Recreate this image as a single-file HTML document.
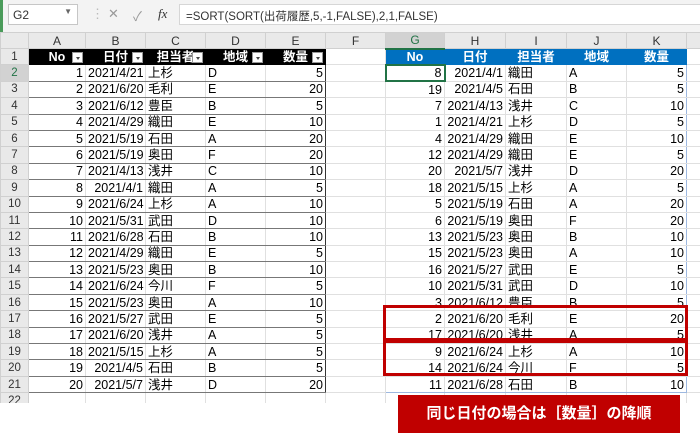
<!DOCTYPE html><html><head><meta charset="utf-8"><style>
*{margin:0;padding:0;box-sizing:border-box}
body{width:700px;height:441px;background:#fff;position:relative;overflow:hidden;font-family:"Liberation Sans","Noto Sans CJK JP",sans-serif;font-size:12px;color:#000}
.fb{position:absolute;left:0;top:0;width:700px;height:32px;background:#f3f3f3;border-left:3px solid #4a9b5a}
.nb{position:absolute;left:5px;top:4px;width:70px;height:21px;background:#fff;border:1px solid #c6c6c6;font-size:12px;padding:3px 0 0 4px;color:#333}
.nb span{position:absolute;right:5px;top:2px;font-size:8px;color:#666}
.ic{position:absolute;top:6px;color:#999;font-size:13px}
.fm{position:absolute;left:176px;top:4px;width:524px;height:21px;background:#fff;border:1px solid #d6d6d6;padding:3px 0 0 6px;font-size:11.5px;color:#333}
table{position:absolute;left:0;top:32px;border-collapse:collapse;table-layout:fixed;width:700px}
td{height:16.4px;border:1px solid #e0e0e0;padding:0 2px;white-space:nowrap;overflow:hidden;line-height:14px;font-size:12.5px}
tr.ch td{height:16px;background:#e9e9e9;text-align:center;border-color:#d0d0d0;color:#333;font-size:12px}
td.rh{background:#e9e9e9;text-align:center;border-color:#d0d0d0;color:#333;font-size:11.5px}
.r{text-align:right}
tr.h td.L{background:#000;color:#fff;font-weight:bold;text-align:center;border-color:#000;position:relative}
tr.h td.L i{position:absolute;right:2px;top:3px;width:11px;height:11px;background:#fff;border:1px solid #999}
tr.h td.L i:after{content:"";position:absolute;left:3px;top:4px;border:2px solid transparent;border-top:3px solid #444}
tr.h td.R{background:#0070c0;color:#fff;font-weight:bold;text-align:center;border-color:#0070c0}
td.L{border-top:1px solid #777;border-bottom:1px solid #777}
td.A{border-left:1px solid #333}
td.E{border-right:1px solid #333}
td.G{border-left:1px solid #9db8e0}
td.K{border-right:1px solid #9db8e0}
.box{position:absolute;border:3px solid #c00000;left:383px;width:305px}
.lab{position:absolute;left:398px;top:395px;width:282px;height:38px;background:#c00000;color:#fff;font-weight:bold;font-size:15px;text-align:center;line-height:38px}
</style></head><body>
<div class="fb"><div class="nb">G2<span>▼</span></div>
<span class="ic" style="left:88px;color:#bbb">⋮</span>
<span class="ic" style="left:105px">✕</span><span class="ic" style="left:130px">✓</span><span class="ic" style="left:155px;font-style:italic;font-family:'Liberation Serif',serif;color:#333">fx</span>
<div class="fm">=SORT(SORT(出荷履歴,5,-1,FALSE),2,1,FALSE)</div></div>
<table>
<colgroup><col style="width:28px"><col style="width:57px"><col style="width:60px"><col style="width:60px"><col style="width:60px"><col style="width:60px"><col style="width:60px"><col style="width:59px"><col style="width:61px"><col style="width:61px"><col style="width:60px"><col style="width:60px"><col style="width:14px"></colgroup>
<tr class="ch"><td></td><td>A</td><td>B</td><td>C</td><td>D</td><td>E</td><td>F</td><td style="background:#d2d2d2;border-bottom:2px solid #217346;color:#217346">G</td><td>H</td><td>I</td><td>J</td><td>K</td><td></td></tr>
<tr class="h"><td class="rh">1</td><td class="L">No<i></i></td><td class="L">日付<i></i></td><td class="L">担当者<i></i></td><td class="L">地域<i></i></td><td class="L">数量<i></i></td><td></td><td class="R">No</td><td class="R">日付</td><td class="R">担当者</td><td class="R">地域</td><td class="R">数量</td><td></td></tr>
<tr><td class="rh" style="background:#d2d2d2;color:#217346">2</td><td class="r L A">1</td><td class="r L">2021/4/21</td><td class="L">上杉</td><td class="L">D</td><td class="r L E">5</td><td></td><td class="r G" style="border:2px solid #217346">8</td><td class="r">2021/4/1</td><td>織田</td><td>A</td><td class="r K">5</td><td></td></tr>
<tr><td class="rh">3</td><td class="r L A">2</td><td class="r L">2021/6/20</td><td class="L">毛利</td><td class="L">E</td><td class="r L E">20</td><td></td><td class="r G">19</td><td class="r">2021/4/5</td><td>石田</td><td>B</td><td class="r K">5</td><td></td></tr>
<tr><td class="rh">4</td><td class="r L A">3</td><td class="r L">2021/6/12</td><td class="L">豊臣</td><td class="L">B</td><td class="r L E">5</td><td></td><td class="r G">7</td><td class="r">2021/4/13</td><td>浅井</td><td>C</td><td class="r K">10</td><td></td></tr>
<tr><td class="rh">5</td><td class="r L A">4</td><td class="r L">2021/4/29</td><td class="L">織田</td><td class="L">E</td><td class="r L E">10</td><td></td><td class="r G">1</td><td class="r">2021/4/21</td><td>上杉</td><td>D</td><td class="r K">5</td><td></td></tr>
<tr><td class="rh">6</td><td class="r L A">5</td><td class="r L">2021/5/19</td><td class="L">石田</td><td class="L">A</td><td class="r L E">20</td><td></td><td class="r G">4</td><td class="r">2021/4/29</td><td>織田</td><td>E</td><td class="r K">10</td><td></td></tr>
<tr><td class="rh">7</td><td class="r L A">6</td><td class="r L">2021/5/19</td><td class="L">奥田</td><td class="L">F</td><td class="r L E">20</td><td></td><td class="r G">12</td><td class="r">2021/4/29</td><td>織田</td><td>E</td><td class="r K">5</td><td></td></tr>
<tr><td class="rh">8</td><td class="r L A">7</td><td class="r L">2021/4/13</td><td class="L">浅井</td><td class="L">C</td><td class="r L E">10</td><td></td><td class="r G">20</td><td class="r">2021/5/7</td><td>浅井</td><td>D</td><td class="r K">20</td><td></td></tr>
<tr><td class="rh">9</td><td class="r L A">8</td><td class="r L">2021/4/1</td><td class="L">織田</td><td class="L">A</td><td class="r L E">5</td><td></td><td class="r G">18</td><td class="r">2021/5/15</td><td>上杉</td><td>A</td><td class="r K">5</td><td></td></tr>
<tr><td class="rh">10</td><td class="r L A">9</td><td class="r L">2021/6/24</td><td class="L">上杉</td><td class="L">A</td><td class="r L E">10</td><td></td><td class="r G">5</td><td class="r">2021/5/19</td><td>石田</td><td>A</td><td class="r K">20</td><td></td></tr>
<tr><td class="rh">11</td><td class="r L A">10</td><td class="r L">2021/5/31</td><td class="L">武田</td><td class="L">D</td><td class="r L E">10</td><td></td><td class="r G">6</td><td class="r">2021/5/19</td><td>奥田</td><td>F</td><td class="r K">20</td><td></td></tr>
<tr><td class="rh">12</td><td class="r L A">11</td><td class="r L">2021/6/28</td><td class="L">石田</td><td class="L">B</td><td class="r L E">10</td><td></td><td class="r G">13</td><td class="r">2021/5/23</td><td>奥田</td><td>B</td><td class="r K">10</td><td></td></tr>
<tr><td class="rh">13</td><td class="r L A">12</td><td class="r L">2021/4/29</td><td class="L">織田</td><td class="L">E</td><td class="r L E">5</td><td></td><td class="r G">15</td><td class="r">2021/5/23</td><td>奥田</td><td>A</td><td class="r K">10</td><td></td></tr>
<tr><td class="rh">14</td><td class="r L A">13</td><td class="r L">2021/5/23</td><td class="L">奥田</td><td class="L">B</td><td class="r L E">10</td><td></td><td class="r G">16</td><td class="r">2021/5/27</td><td>武田</td><td>E</td><td class="r K">5</td><td></td></tr>
<tr><td class="rh">15</td><td class="r L A">14</td><td class="r L">2021/6/24</td><td class="L">今川</td><td class="L">F</td><td class="r L E">5</td><td></td><td class="r G">10</td><td class="r">2021/5/31</td><td>武田</td><td>D</td><td class="r K">10</td><td></td></tr>
<tr><td class="rh">16</td><td class="r L A">15</td><td class="r L">2021/5/23</td><td class="L">奥田</td><td class="L">A</td><td class="r L E">10</td><td></td><td class="r G">3</td><td class="r">2021/6/12</td><td>豊臣</td><td>B</td><td class="r K">5</td><td></td></tr>
<tr><td class="rh">17</td><td class="r L A">16</td><td class="r L">2021/5/27</td><td class="L">武田</td><td class="L">E</td><td class="r L E">5</td><td></td><td class="r G">2</td><td class="r">2021/6/20</td><td>毛利</td><td>E</td><td class="r K">20</td><td></td></tr>
<tr><td class="rh">18</td><td class="r L A">17</td><td class="r L">2021/6/20</td><td class="L">浅井</td><td class="L">A</td><td class="r L E">5</td><td></td><td class="r G">17</td><td class="r">2021/6/20</td><td>浅井</td><td>A</td><td class="r K">5</td><td></td></tr>
<tr><td class="rh">19</td><td class="r L A">18</td><td class="r L">2021/5/15</td><td class="L">上杉</td><td class="L">A</td><td class="r L E">5</td><td></td><td class="r G">9</td><td class="r">2021/6/24</td><td>上杉</td><td>A</td><td class="r K">10</td><td></td></tr>
<tr><td class="rh">20</td><td class="r L A">19</td><td class="r L">2021/4/5</td><td class="L">石田</td><td class="L">B</td><td class="r L E">5</td><td></td><td class="r G">14</td><td class="r">2021/6/24</td><td>今川</td><td>F</td><td class="r K">5</td><td></td></tr>
<tr><td class="rh">21</td><td class="r L A">20</td><td class="r L">2021/5/7</td><td class="L">浅井</td><td class="L">D</td><td class="r L E">20</td><td></td><td class="r G" style="border-bottom:1px solid #9db8e0">11</td><td class="r" style="border-bottom:1px solid #9db8e0">2021/6/28</td><td style="border-bottom:1px solid #9db8e0">石田</td><td style="border-bottom:1px solid #9db8e0">B</td><td class="r K" style="border-bottom:1px solid #9db8e0">10</td><td></td></tr>
<tr><td class="rh" style="height:12px">22</td><td style="height:12px"></td><td></td><td></td><td></td><td></td><td></td><td></td><td></td><td></td><td></td><td></td><td></td></tr>
</table>
<div style="position:absolute;left:0;top:403px;width:700px;height:38px;background:#fff"></div>
<div class="box" style="top:305px;height:36px"></div>
<div class="box" style="top:340px;height:36px"></div>
<div class="lab">同じ日付の場合は［数量］の降順</div>
</body></html>
